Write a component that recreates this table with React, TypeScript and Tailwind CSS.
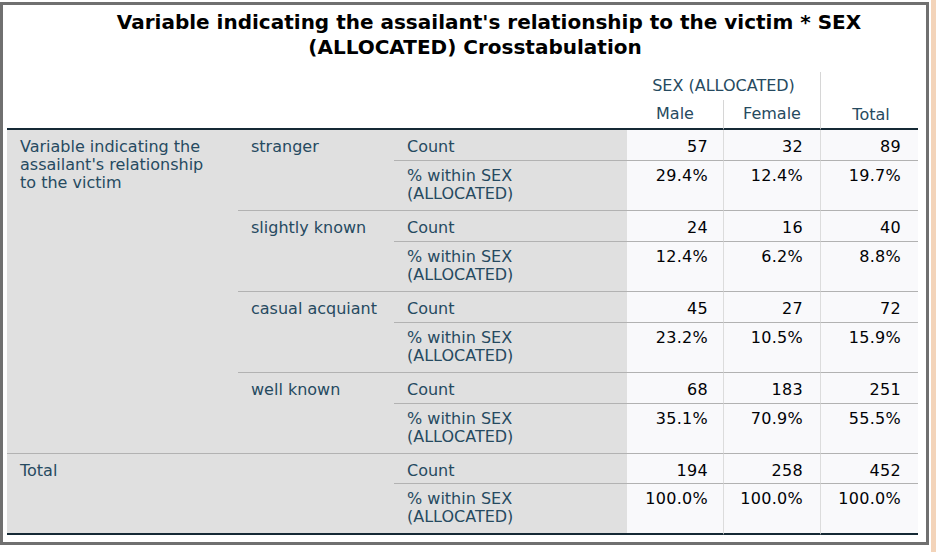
import React from "react";

type Cat = {
  label: string;
  count: [string, string, string];
  pct: [string, string, string];
};

const cats: Cat[] = [
  { label: "stranger", count: ["57", "32", "89"], pct: ["29.4%", "12.4%", "19.7%"] },
  { label: "slightly known", count: ["24", "16", "40"], pct: ["12.4%", "6.2%", "8.8%"] },
  { label: "casual acquiant", count: ["45", "27", "72"], pct: ["23.2%", "10.5%", "15.9%"] },
  { label: "well known", count: ["68", "183", "251"], pct: ["35.1%", "70.9%", "55.5%"] },
];

const total: Cat = {
  label: "Total",
  count: ["194", "258", "452"],
  pct: ["100.0%", "100.0%", "100.0%"],
};

const lbl = "bg-[#e0e0e0] text-[#264a60] align-top text-left pl-[13px]";
const num = "bg-[#f9f9fb] text-[#010205] align-top text-right tracking-[0.3px]";

function NumCells({ vals, bottom }: { vals: string[]; bottom: string }) {
  return (
    <>
      {vals.map((v, i) => (
        <td
          key={i}
          className={`${num} ${i === 0 ? "pr-[15px]" : "pr-[17px] border-l border-l-[#dcdcdc]"} ${bottom}`}
        >
          {v}
        </td>
      ))}
    </>
  );
}

export default function App() {
  return (
    <div className="flex h-[552px] w-[936px] bg-white font-['DejaVu_Sans',sans-serif] text-[16px] leading-[18px]">
      <div className="w-[931px] pt-[2px]">
        <div className="h-[543px] w-[929px] border-[3px] border-[#707070] bg-white pl-[4px]">
          {/* title */}
          <div className="h-[67px] w-[911px] pt-[5px] text-center text-[20px] font-bold leading-[25px] text-black">
            <div className="pl-[53px]">Variable indicating the assailant's relationship to the victim * SEX</div>
            <div className="pl-[25px]">(ALLOCATED) Crosstabulation</div>
          </div>

          <table className="w-[911px] table-fixed border-separate border-spacing-0">
            <colgroup>
              <col className="w-[231px]" />
              <col className="w-[156px]" />
              <col className="w-[233px]" />
              <col className="w-[96px]" />
              <col className="w-[97px]" />
              <col className="w-[98px]" />
            </colgroup>
            <thead>
              <tr>
                <th colSpan={3} className="h-[28px] bg-white p-0" />
                <th colSpan={2} className="h-[28px] bg-white p-0 text-center align-middle font-normal text-[#264a60]">
                  SEX (ALLOCATED)
                </th>
                <th
                  rowSpan={2}
                  className="border-l border-b-2 border-l-[#d6d6d6] border-b-[#152935] bg-white p-0 pb-[4px] pl-[3px] text-center align-bottom font-normal text-[#264a60]"
                >
                  Total
                </th>
              </tr>
              <tr>
                <th colSpan={3} className="h-[30px] border-b-2 border-b-[#152935] bg-white p-0" />
                <th className="h-[30px] border-b-2 border-b-[#152935] bg-white p-0 text-center align-middle font-normal text-[#264a60]">
                  Male
                </th>
                <th className="h-[30px] border-l border-b-2 border-l-[#d6d6d6] border-b-[#152935] bg-white p-0 text-center align-middle font-normal text-[#264a60]">
                  Female
                </th>
              </tr>
            </thead>
            <tbody>
              {cats.map((c, ci) => (
                <React.Fragment key={c.label}>
                  <tr>
                    {ci === 0 && (
                      <td rowSpan={8} className={`${lbl} border-b border-b-[#b2b2b2] pt-[8px] pr-[20px]`}>
                        Variable indicating the assailant's relationship to the victim
                      </td>
                    )}
                    <td rowSpan={2} className={`${lbl} border-b border-b-[#b2b2b2] pt-[8px]`}>
                      {c.label}
                    </td>
                    <td className={`${lbl} h-[31px] border-b border-b-[#b2b2b2] pt-[8px]`}>Count</td>
                    <NumCells vals={c.count} bottom="border-b border-b-[#b2b2b2] pt-[8px]" />
                  </tr>
                  <tr>
                    <td className={`${lbl} h-[50px] border-b border-b-[#b2b2b2] pt-[6px] pr-[8px]`}>
                      % within SEX (ALLOCATED)
                    </td>
                    <NumCells vals={c.pct} bottom="border-b border-b-[#b2b2b2] pt-[6px]" />
                  </tr>
                </React.Fragment>
              ))}
              <tr>
                <td colSpan={2} rowSpan={2} className={`${lbl} border-b-2 border-b-[#152935] pt-[8px]`}>
                  {total.label}
                </td>
                <td className={`${lbl} h-[30px] border-b border-b-[#b2b2b2] pt-[8px]`}>Count</td>
                <NumCells vals={total.count} bottom="border-b border-b-[#b2b2b2] pt-[8px]" />
              </tr>
              <tr>
                <td className={`${lbl} h-[51px] border-b-2 border-b-[#152935] pt-[6px] pr-[8px]`}>
                  % within SEX (ALLOCATED)
                </td>
                <NumCells vals={total.pct} bottom="border-b-2 border-b-[#152935] pt-[6px]" />
              </tr>
            </tbody>
          </table>
        </div>
      </div>
      <div className="w-[5px] bg-[#f3d4ba]" />
    </div>
  );
}
